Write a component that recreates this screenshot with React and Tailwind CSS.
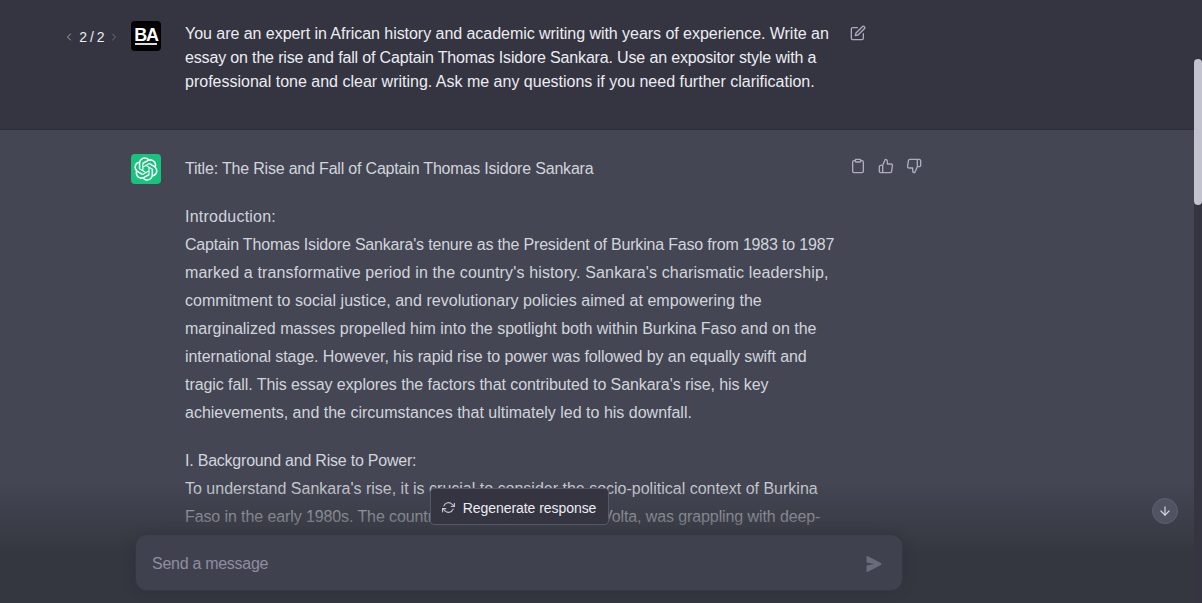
import { FiArrowDown, FiChevronLeft, FiChevronRight, FiClipboard, FiEdit, FiRefreshCw, FiThumbsDown, FiThumbsUp } from "react-icons/fi";

// tracking is tuned per line: the original font has other glyph widths
const PROMPT = [
  ["You are an expert in African history and academic writing with years of experience. Write an", "tracking-[-0.04px]"],
  ["essay on the rise and fall of Captain Thomas Isidore Sankara. Use an expositor style with a", "tracking-[-0.155px]"],
  ["professional tone and clear writing. Ask me any questions if you need further clarification.", ""],
];

const INTRO = [
  ["Captain Thomas Isidore Sankara's tenure as the President of Burkina Faso from 1983 to 1987", "tracking-[-0.18px]"],
  ["marked a transformative period in the country's history. Sankara's charismatic leadership,", "tracking-[0.14px]"],
  ["commitment to social justice, and revolutionary policies aimed at empowering the", "tracking-[0.04px]"],
  ["marginalized masses propelled him into the spotlight both within Burkina Faso and on the", ""],
  ["international stage. However, his rapid rise to power was followed by an equally swift and", "tracking-[-0.09px]"],
  ["tragic fall. This essay explores the factors that contributed to Sankara's rise, his key", "tracking-[-0.07px]"],
  ["achievements, and the circumstances that ultimately led to his downfall.", ""],
];

const BACKGROUND = [
  ["To understand Sankara's rise, it is crucial to consider the socio-political context of Burkina", ""],
  ["Faso in the early 1980s. The country, then known as Upper Volta, was grappling with deep-", "tracking-[-0.1px]"],
  ["rooted economic challenges, widespread poverty, and political instability.", ""],
];

function Lines({ lines }) {
  return lines.map(([text, cls]) => (
    <span key={text} className={`block whitespace-nowrap ${cls}`}>
      {text}
    </span>
  ));
}

function OpenAiLogo() {
  return (
    <svg className="w-6 h-6" viewBox="0 0 41 41" fill="currentColor">
      <path d="M37.5324 16.8707C37.9808 15.5241 38.1363 14.0974 37.9886 12.6859C37.8409 11.2744 37.3934 9.91076 36.676 8.68622C35.6126 6.83404 33.9882 5.3676 32.0373 4.4985C30.0864 3.62941 27.9098 3.40259 25.8215 3.85078C24.8796 2.7893 23.7219 1.94125 22.4257 1.36341C21.1295 0.785575 19.7249 0.491269 18.3058 0.500197C16.1708 0.495044 14.0893 1.16803 12.3614 2.42214C10.6335 3.67624 9.34853 5.44666 8.6917 7.47815C7.30085 7.76286 5.98686 8.3414 4.8377 9.17505C3.68854 10.0087 2.73073 11.0782 2.02839 12.312C0.956464 14.1591 0.498905 16.2988 0.721698 18.4228C0.944492 20.5467 1.83612 22.5449 3.268 24.1293C2.81966 25.4759 2.66413 26.9026 2.81182 28.3141C2.95951 29.7256 3.40701 31.0892 4.12437 32.3138C5.18791 34.1659 6.8123 35.6322 8.76321 36.5013C10.7141 37.3704 12.8907 37.5973 14.9789 37.1492C15.9208 38.2107 17.0786 39.0587 18.3747 39.6366C19.6709 40.2144 21.0755 40.5087 22.4946 40.4998C24.6307 40.5054 26.7133 39.8321 28.4418 38.5772C30.1704 37.3223 31.4556 35.5506 32.1119 33.5179C33.5027 33.2332 34.8167 32.6547 35.9659 31.821C37.115 30.9874 38.0728 29.9178 38.7752 28.684C39.8458 26.8371 40.3023 24.6979 40.0789 22.5748C39.8556 20.4517 38.9639 18.4544 37.5324 16.8707ZM22.4978 37.8849C20.7443 37.8874 19.0459 37.2733 17.6994 36.1501C17.7601 36.117 17.8666 36.0586 17.936 36.0161L25.9004 31.4156C26.1003 31.3019 26.2663 31.137 26.3813 30.9378C26.4964 30.7386 26.5563 30.5124 26.5549 30.2825V19.0542L29.9213 20.998C29.9389 21.0068 29.9541 21.0198 29.9656 21.0359C29.977 21.052 29.9842 21.0707 29.9867 21.0902V30.3889C29.9842 32.375 29.1946 34.2791 27.7909 35.6841C26.3872 37.0892 24.4838 37.8806 22.4978 37.8849ZM6.39227 31.0064C5.51397 29.4888 5.19742 27.7107 5.49804 25.9832C5.55718 26.0187 5.66048 26.0818 5.73461 26.1244L13.699 30.7248C13.8975 30.8408 14.1233 30.902 14.3532 30.902C14.583 30.902 14.8088 30.8408 15.0073 30.7248L24.731 25.1103V28.9979C24.7321 29.0177 24.7283 29.0376 24.7199 29.0556C24.7115 29.0736 24.6988 29.0893 24.6829 29.1012L16.6317 33.7497C14.9096 34.7416 12.8643 35.0097 10.9447 34.4954C9.02506 33.9811 7.38785 32.7263 6.39227 31.0064ZM4.29707 13.6194C5.17156 12.0998 6.55279 10.9364 8.19885 10.3327C8.19885 10.4013 8.19491 10.5228 8.19491 10.6071V19.808C8.19351 20.0378 8.25334 20.2638 8.36823 20.4629C8.48312 20.6619 8.64893 20.8267 8.84863 20.9404L18.5723 26.5542L15.206 28.4979C15.1894 28.5089 15.1703 28.5155 15.1505 28.5173C15.1307 28.5191 15.1107 28.516 15.0924 28.5082L7.04046 23.8557C5.32135 22.8601 4.06716 21.2235 3.55289 19.3046C3.03862 17.3858 3.30624 15.3413 4.29707 13.6194ZM31.955 20.0556L22.2312 14.4411L25.5976 12.4981C25.6142 12.4872 25.6333 12.4805 25.6531 12.4787C25.6729 12.4769 25.6928 12.4801 25.7111 12.4879L33.7631 17.1364C34.9967 17.849 36.0017 18.8982 36.6606 20.1613C37.3194 21.4244 37.6047 22.849 37.4832 24.2684C37.3617 25.6878 36.8382 27.0432 35.9743 28.1759C35.1103 29.3086 33.9415 30.1717 32.6047 30.6641C32.6047 30.5947 32.6047 30.4733 32.6047 30.3889V21.188C32.6066 20.9586 32.5474 20.7328 32.4332 20.5338C32.319 20.3348 32.154 20.1698 31.955 20.0556ZM35.3055 15.0128C35.2464 14.9765 35.1431 14.9142 35.069 14.8717L27.1045 10.2712C26.906 10.1554 26.6803 10.0943 26.4504 10.0943C26.2206 10.0943 25.9948 10.1554 25.7963 10.2712L16.0726 15.8858V11.9982C16.0715 11.9783 16.0753 11.9585 16.0837 11.9405C16.0921 11.9225 16.1048 11.9068 16.1207 11.8949L24.1719 7.25025C25.4053 6.53903 26.8158 6.19376 28.2383 6.25482C29.6608 6.31589 31.0364 6.78077 32.2044 7.59508C33.3723 8.40939 34.2842 9.53945 34.8334 10.8531C35.3826 12.1667 35.5464 13.6095 35.3055 15.0128ZM14.2424 21.9419L10.8752 19.9981C10.8576 19.9893 10.8423 19.9763 10.8309 19.9602C10.8195 19.9441 10.8122 19.9254 10.8098 19.9058V10.6071C10.8107 9.18295 11.2173 7.78848 11.9819 6.58696C12.7466 5.38544 13.8377 4.42659 15.1275 3.82264C16.4173 3.21869 17.8524 2.99464 19.2649 3.1767C20.6775 3.35876 22.0089 3.93941 23.1034 4.85067C23.0427 4.88379 22.937 4.94215 22.8668 4.98473L14.9024 9.58517C14.7025 9.69878 14.5366 9.86356 14.4215 10.0626C14.3065 10.2616 14.2466 10.4877 14.2479 10.7175L14.2424 21.9419ZM16.071 17.9991L20.4018 15.4978L24.7325 17.9975V22.9985L20.4018 25.4983L16.071 22.9985V17.9991Z" />
    </svg>
  );
}

function UserAvatar() {
  return (
    <div className="w-[30px] h-[30px] shrink-0 rounded-sm bg-black flex flex-col items-center justify-center text-white">
      <span className="text-[18px] leading-[14px] font-bold tracking-[-1.2px]">BA</span>
      <span className="w-[22px] h-[2px] bg-[#dddddd] mt-[1px]" />
    </div>
  );
}

export default function App() {
  return (
    <div className="relative flex h-screen overflow-hidden bg-[#343541] font-['Liberation_Sans',Arial,sans-serif] text-base">
      <main className="relative flex-1 min-w-0 overflow-hidden">
        {/* user prompt */}
        <div className="h-[130px] bg-[#343541] border-b border-[#2d2e38] text-[#ececf1]">
          <div className="flex pt-[21px]">
            <div className="w-[131px] shrink-0 flex items-start justify-end pt-[7px] pr-[11px] text-sm leading-[18px] text-[#ececf1]">
              <FiChevronLeft className="w-3 h-3 mt-[3px] mr-[4px] text-[#a3a3b0]" />
              <span className="whitespace-pre tracking-[-0.5px]">2 / 2</span>
              <FiChevronRight className="w-3 h-3 mt-[3px] ml-[4px] text-[#6e6e80]" />
            </div>
            <UserAvatar />
            <div className="ml-6 w-[650px] leading-6 pt-px">
              <Lines lines={PROMPT} />
            </div>
            <FiEdit className="ml-[15px] mt-[4px] w-4 h-4 text-[#acacbe]" />
          </div>
        </div>

        {/* assistant answer */}
        <div className="h-[473px] bg-[#444654] text-[#d1d5db] overflow-hidden">
          <div className="flex pt-6">
            <div className="w-[131px] shrink-0" />
            <div className="w-[30px] h-[30px] shrink-0 rounded-sm bg-[#19c37d] flex items-center justify-center text-white">
              <OpenAiLogo />
            </div>
            <div className="ml-6 w-[650px] leading-7 pt-px">
              <p className="tracking-[-0.19px]">Title: The Rise and Fall of Captain Thomas Isidore Sankara</p>
              <p className="mt-5 tracking-[0.23px]">Introduction:</p>
              <Lines lines={INTRO} />
              <p className="mt-5 tracking-[-0.22px]">I. Background and Rise to Power:</p>
              <Lines lines={BACKGROUND} />
            </div>
            <div className="ml-[15px] mt-[4px] flex gap-3 text-[#acacbe]">
              <FiClipboard className="w-4 h-4" />
              <FiThumbsUp className="w-4 h-4" />
              <FiThumbsDown className="w-4 h-4" />
            </div>
          </div>
        </div>

        {/* composer over the fade */}
        <div className="absolute left-0 right-0 bottom-0 h-[123px] bg-[linear-gradient(180deg,rgba(53,55,64,0),#353740_58.85%)]">
          <div className="flex justify-center w-[1038px] pt-2">
            <button className="h-[37px] w-[179px] flex items-center justify-center gap-[8px] pt-[2px] rounded bg-[#343541] border border-[#565869] text-sm text-[#ececf1]">
              <FiRefreshCw className="w-[13px] h-[13px] text-[#c5c5d2]" />
              <span className="tracking-[-0.05px]">Regenerate response</span>
            </button>
          </div>
          <div className="ml-[135px] mt-[9px] w-[768px] h-[57px] flex items-center justify-between pt-[2px] pl-4 pr-[20px] rounded-xl bg-[#40414f] border border-[#363742] shadow-[0_0_15px_rgba(0,0,0,0.1)] text-[#8e8ea0]">
            <span className="tracking-[-0.28px]">Send a message</span>
            <svg className="w-4 h-4 text-[#6b6c7b]" viewBox="0 0 16 16" fill="currentColor">
              <path d="M.5 1.163A1 1 0 0 1 1.97.28l12.868 6.837a1 1 0 0 1 0 1.766L1.969 15.72A1 1 0 0 1 .5 14.836V10.33a1 1 0 0 1 .816-.983L8.5 8 1.316 6.653A1 1 0 0 1 .5 5.67V1.163Z" />
            </svg>
          </div>
        </div>

        {/* jump to bottom */}
        <button className="absolute right-[16px] bottom-[79px] w-[26px] h-[26px] rounded-full bg-[#565869]/80 border border-[#5e606f] flex items-center justify-center text-[#d9d9e3]">
          <FiArrowDown className="w-[14px] h-[14px]" />
        </button>
      </main>

      {/* scrollbar */}
      <div className="w-2 shrink-0 bg-[#343541] pt-[59px]">
        <div className="h-[146px] rounded-full bg-[#c3c3cf]" />
      </div>
    </div>
  );
}
